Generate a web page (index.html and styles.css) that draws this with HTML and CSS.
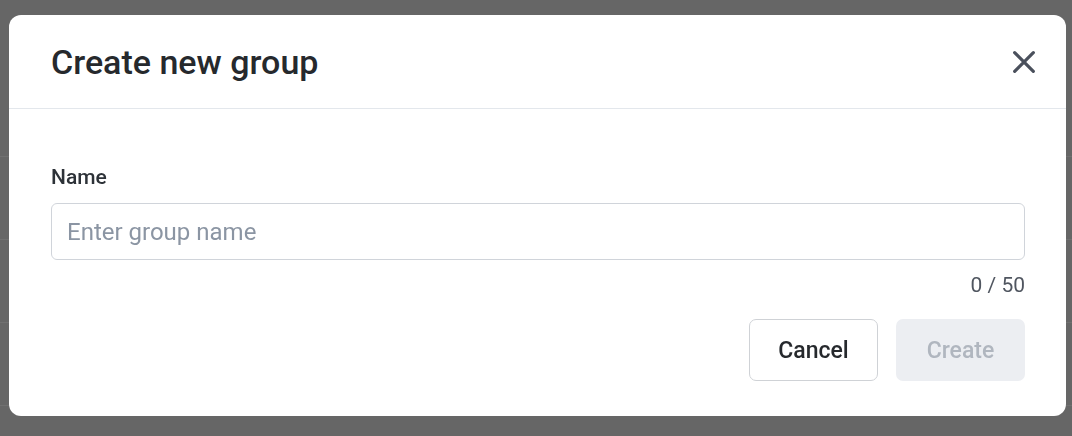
FILE: index.html
```html
<!DOCTYPE html>
<html lang="en">
<head>
<meta charset="utf-8">
<title>Create new group</title>
<link rel="stylesheet" href="styles.css">
</head>
<body>
<div class="backdrop">
  <div class="bg-row"></div>
  <div class="bg-row"></div>
  <div class="bg-row"></div>
  <div class="bg-row"></div>
</div>
<div class="modal" role="dialog" aria-labelledby="modal-title">
  <header class="modal-header">
    <h2 id="modal-title" class="modal-title">Create new group</h2>
    <button class="close-btn" aria-label="Close">
      <svg viewBox="0 0 24 24" width="32" height="32" fill="none" stroke="currentColor" stroke-width="2.4" stroke-linecap="round">
        <path d="M5 5 L19 19 M19 5 L5 19"/>
      </svg>
    </button>
  </header>
  <div class="modal-body">
    <label class="field-label" for="group-name">Name</label>
    <input id="group-name" class="text-input" type="text" placeholder="Enter group name">
    <div class="counter">0 / 50</div>
    <div class="actions">
      <button class="btn btn-secondary">Cancel</button>
      <button class="btn btn-disabled" disabled>Create</button>
    </div>
  </div>
</div>
</body>
</html>
```

FILE: styles.css
```css
html, body {
  margin: 0;
  padding: 0;
}
body {
  width: 1072px;
  height: 436px;
  background: #666666;
  font-family: Roboto, "Liberation Sans", sans-serif;
  overflow: hidden;
}
.backdrop {
  display: flex;
  flex-direction: column;
  padding-top: 74px;
}
.bg-row {
  height: 82px;
  border-bottom: 1px solid #707070;
}
.modal {
  position: fixed;
  left: 9px;
  top: 15px;
  width: 1057px;
  height: 401px;
  background: #ffffff;
  border-radius: 12px;
  display: flex;
  flex-direction: column;
  box-sizing: border-box;
}
.modal-header {
  height: 94px;
  box-sizing: border-box;
  border-bottom: 1px solid #e3e7ec;
  display: flex;
  align-items: center;
  justify-content: space-between;
  padding: 0 25px 0 42px;
}
.modal-title {
  margin: 0;
  font-size: 34px;
  font-weight: 500;
  color: #26292d;
  line-height: 40px;
}
.close-btn {
  border: none;
  background: none;
  padding: 0;
  width: 34px;
  height: 34px;
  display: flex;
  align-items: center;
  justify-content: center;
  color: #4a505c;
  cursor: pointer;
}
.modal-body {
  padding: 56px 41px 0 42px;
  display: flex;
  flex-direction: column;
}
.field-label {
  font-size: 21px;
  font-weight: 500;
  color: #2d3238;
  line-height: 24px;
  margin-bottom: 14px;
}
.text-input {
  height: 57px;
  box-sizing: border-box;
  border: 1.5px solid #d0d4da;
  border-radius: 6px;
  padding: 0 15px;
  font-family: inherit;
  font-size: 24px;
  color: #2d3238;
  outline: none;
}
.text-input::placeholder {
  color: #8b95a3;
}
.counter {
  align-self: flex-end;
  font-size: 21px;
  color: #505660;
  line-height: 24px;
  margin-top: 13px;
}
.actions {
  display: flex;
  justify-content: flex-end;
  gap: 18px;
  margin-top: 22px;
}
.btn {
  height: 62px;
  box-sizing: border-box;
  border-radius: 7px;
  font-family: inherit;
  font-size: 23px;
  font-weight: 500;
  padding: 0;
}
.btn-secondary {
  width: 129px;
  background: #ffffff;
  border: 1.5px solid #cfd2d6;
  color: #26292d;
}
.btn-disabled {
  width: 129px;
  background: #eceef2;
  border: none;
  color: #b0b6bf;
}
```
